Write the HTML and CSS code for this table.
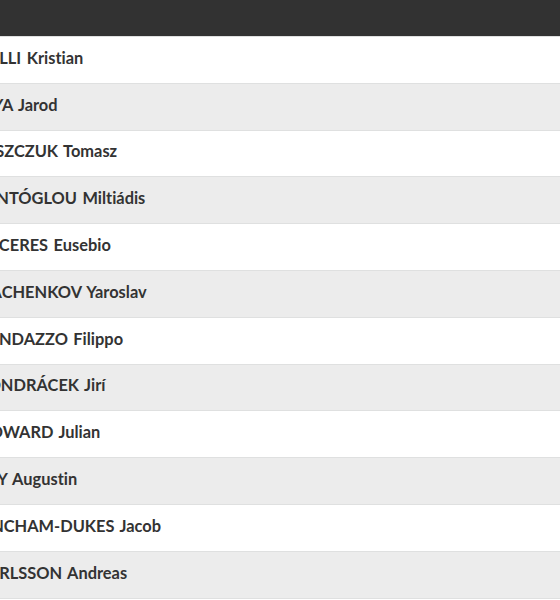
FILE: index.html
```html
<!DOCTYPE html>
<html>
<head>
<meta charset="utf-8">
<link rel="stylesheet" href="styles.css">
</head>
<body>
<div class="page">
  <header class="topbar"></header>
  <ul class="list">
    <li class="row"><span class="name">PULLI Kristian</span></li>
    <li class="row alt"><span class="name">BIYA Jarod</span></li>
    <li class="row"><span class="name">JASZCZUK Tomasz</span></li>
    <li class="row alt"><span class="name">TENTÓGLOU Miltiádis</span></li>
    <li class="row"><span class="name">CÁCERES Eusebio</span></li>
    <li class="row alt"><span class="name">ISACHENKOV Yaroslav</span></li>
    <li class="row"><span class="name">RANDAZZO Filippo</span></li>
    <li class="row alt"><span class="name">KONDRÁCEK Jirí</span></li>
    <li class="row"><span class="name">HOWARD Julian</span></li>
    <li class="row alt"><span class="name">BEY Augustin</span></li>
    <li class="row"><span class="name">FINCHAM-DUKES Jacob</span></li>
    <li class="row alt"><span class="name">CARLSSON Andreas</span></li>
    <li class="row"><span class="name">LASA Emiliano</span></li>
  </ul>
</div>
</body>
</html>
```
FILE: styles.css
```css
html, body {
  margin: 0;
  padding: 0;
  background: #ffffff;
  overflow: hidden;
}
.page {
  width: 560px;
  height: 600px;
  overflow: hidden;
  font-family: "Lato", "Open Sans", sans-serif;
  font-weight: 700;
  font-size: 16.4px;
  word-spacing: 1.5px;
  font-variant-ligatures: none;
  color: #333333;
}
.topbar {
  height: 36px;
  background: #323232;
}
.list {
  list-style: none;
  margin: 0;
  padding: 0;
}
.row {
  box-sizing: border-box;
  height: 46.8px;
  border-top: 1px solid #dfe0e0;
  background: #ffffff;
  display: flex;
  align-items: center;
  padding-bottom: 5px;
  white-space: nowrap;
}
.row.alt {
  background: #ececec;
}
.name {
  margin-left: -23px;
}
```
